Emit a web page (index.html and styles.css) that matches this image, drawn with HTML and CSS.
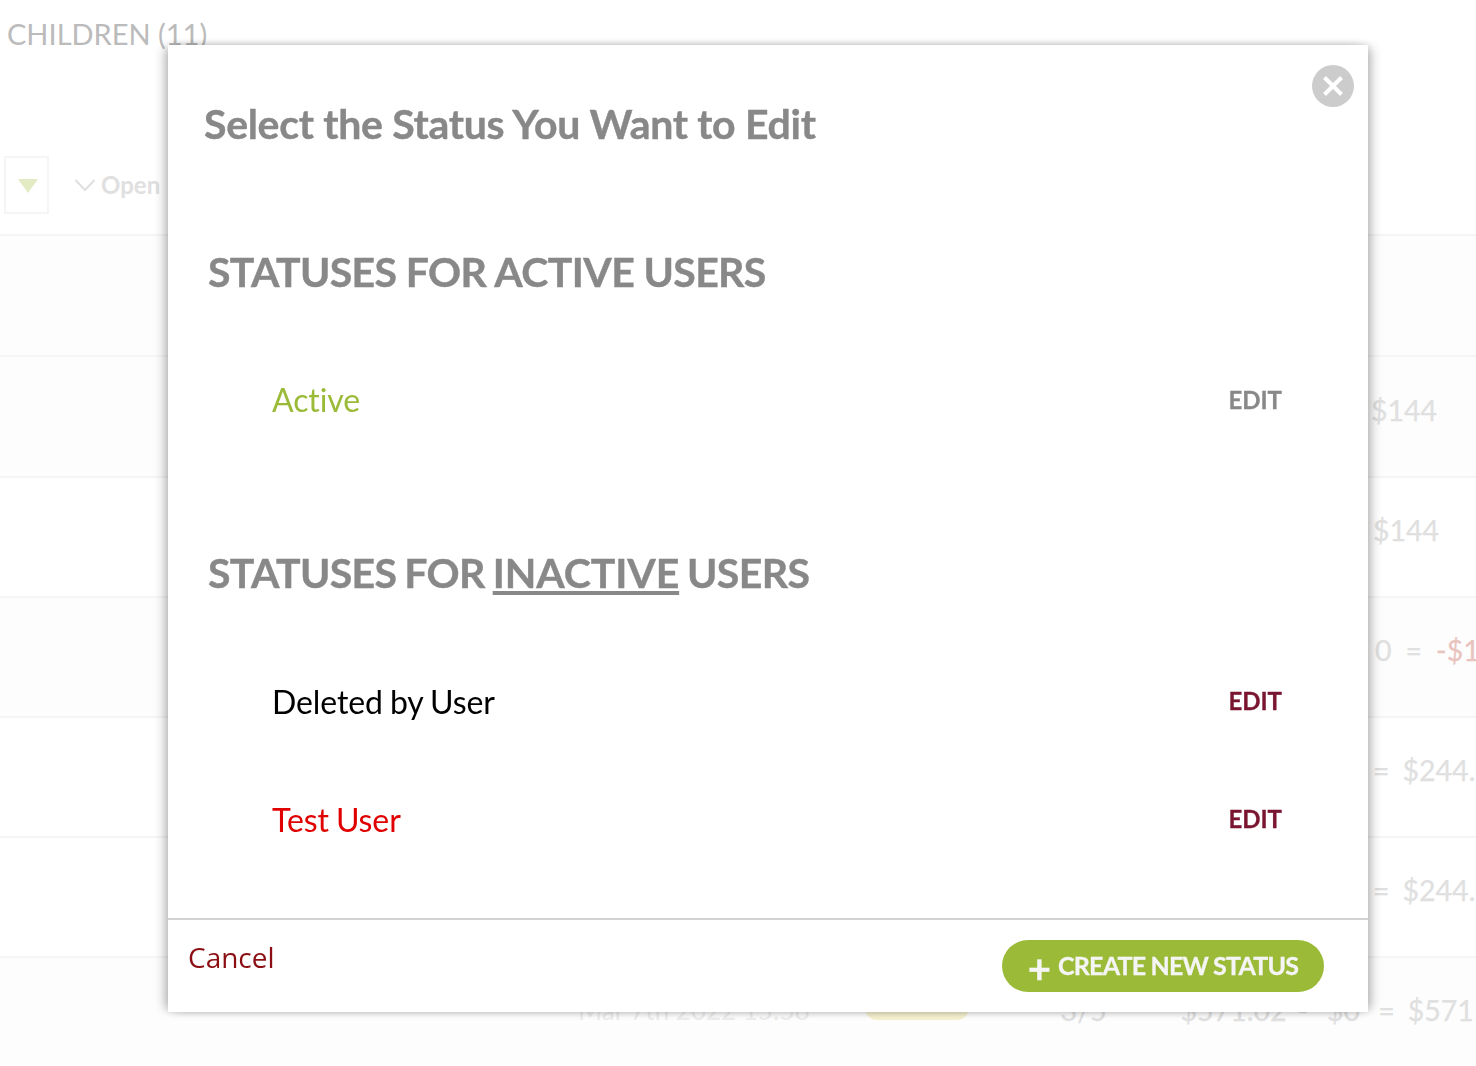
FILE: index.html
```html
<!DOCTYPE html>
<html lang="en">
<head>
<meta charset="utf-8">
<title>Select the Status You Want to Edit</title>
<link rel="stylesheet" href="styles.css">
</head>
<body>
<main class="page">
  <h2 class="children">CHILDREN (11)</h2>
  <div class="filters">
    <span class="filter-box"><span class="filter-arrow"></span></span>
    <span class="open-filter">
      <svg class="chevron" viewBox="0 0 22 14" aria-hidden="true"><path d="M1.5 2 11 12 20.5 2"/></svg>
      Open
    </span>
  </div>
  <section class="rows">
    <div class="row tint tall"></div>
    <div class="row tint tall"><span class="amt pad-a">$144</span></div>
    <div class="row"><span class="amt pad-b">$144</span></div>
    <div class="row tint">
      <span class="amt pad-c">0</span><span class="amt op-eq">=</span><span class="amt neg">-$1</span>
    </div>
    <div class="row">
      <span class="amt pad-d">=</span><span class="amt result">$244.</span>
    </div>
    <div class="row">
      <span class="amt pad-d">=</span><span class="amt result">$244.</span>
    </div>
    <div class="row tint last">
      <span class="date">Mar 7th 2022 15:56</span>
      <span class="badge"></span>
      <span class="amt count">3/5</span>
      <span class="amt sum">$571.02</span><span class="amt minus">-</span><span class="amt paid">$0</span><span class="amt op-last">=</span><span class="amt result">$571</span>
    </div>
  </section>
</main>

<div class="modal" role="dialog">
  <button class="close" type="button" aria-label="Close">
    <svg viewBox="0 0 22 22" aria-hidden="true"><path d="M2.5 2.5 19.5 19.5M19.5 2.5 2.5 19.5"/></svg>
  </button>
  <div class="modal-body">
    <h1 class="title">Select the Status You Want to Edit</h1>
    <h2 class="section-head">STATUSES FOR ACTIVE USERS</h2>
    <ul class="status-list">
      <li class="status"><span class="status-name green">Active</span><a class="edit muted">EDIT</a></li>
    </ul>
    <h2 class="section-head second">STATUSES FOR <u>INACTIVE</u> USERS</h2>
    <ul class="status-list lower">
      <li class="status"><span class="status-name">Deleted by User</span><a class="edit">EDIT</a></li>
      <li class="status"><span class="status-name red">Test User</span><a class="edit">EDIT</a></li>
    </ul>
  </div>
  <footer class="modal-foot">
    <a class="cancel">Cancel</a>
    <button class="create" type="button"><span class="plus">+</span>CREATE NEW STATUS</button>
  </footer>
</div>
</body>
</html>
```
FILE: styles.css
```css
* { box-sizing: border-box; }
html, body { margin: 0; height: 100%; overflow: hidden; background: #fff; }
body { font-family: Lato, "Liberation Sans", sans-serif; }

.page { width: 1476px; }
.children { margin: 0; padding: 16px 0 0 7px; height: 155px; font-size: 29px; line-height: 36px; font-weight: 400; color: #bbb; }
.filters { display: flex; align-items: center; height: 79px; padding: 0 0 20px 4px; }
.filter-box { width: 45px; height: 58px; border: 2px solid #f5f5f5; display: flex; justify-content: center; padding: 21px 0 0 2px; }
.filter-arrow { width: 0; height: 0; border-left: 10px solid transparent; border-right: 10px solid transparent; border-top: 14px solid #e2ebc3; }
.open-filter { display: flex; align-items: center; margin-left: 25px; gap: 5px; font-size: 24px; font-weight: 700; color: #e0e0e0; }
.chevron { width: 22px; height: 14px; fill: none; stroke: #e0e0e0; stroke-width: 2; }

.rows { border-top: 2px solid #f5f5f5; }
.row { height: 120px; padding-bottom: 14px; display: flex; align-items: center; white-space: nowrap; border-bottom: 2px solid #f5f5f5; overflow: hidden; }
.tall { height: 121px; }
.tint { background: #fdfdfd; }
.row.last { border-bottom: 0; padding-bottom: 17px; }
.amt { font-size: 28.5px; line-height: 36px; color: #e0e0e0; -webkit-text-stroke: .25px #e0e0e0; }
.pad-a { margin-left: 1371px; }
.pad-b { margin-left: 1373px; }
.pad-c { margin-left: 1375px; }
.pad-d { margin-left: 1373px; }
.op-eq { margin: 0 14px; }
.result { margin-left: 13px; }
.amt.neg { color: #e9c4bf; -webkit-text-stroke-color: #e9c4bf; }
.date { margin-left: 578px; font-size: 26px; line-height: 36px; color: #ececec; }
.badge { width: 104px; height: 40px; margin: 0 0 20px 55px; border-radius: 12px; background: #f5f1cf; }
.count { margin-left: 92px; }
.sum { margin-left: 74px; }
.minus { margin-left: 11px; }
.paid { margin-left: 19px; }
.op-last { margin-left: 18px; }

.modal { position: fixed; left: 168px; top: 45px; width: 1200px; height: 967px; background: #fff; display: flex; flex-direction: column; box-shadow: 7px 0 10px -3px rgba(0,0,0,.22), -7px 0 10px -3px rgba(0,0,0,.22), 0 0 8px rgba(0,0,0,.14); }
.close { position: absolute; right: 14px; top: 20px; width: 42px; height: 42px; padding: 10px; border: 0; border-radius: 50%; background: #ccc; }
.close svg { display: block; width: 22px; height: 22px; fill: none; stroke: #fff; stroke-width: 4; }
.modal-body { flex: 1; padding: 52px 86px 0 36px; }
.title { margin: 0; font-size: 41px; line-height: 54px; font-weight: 700; letter-spacing: -.3px; color: #888; -webkit-text-stroke: .4px #888; }
.section-head { margin: 94px 0 0 4px; font-size: 41px; line-height: 54px; font-weight: 700; letter-spacing: -.62px; color: #888; -webkit-text-stroke: .4px #888; }
.section-head.second { margin-top: 88px; word-spacing: -1.5px; }
.section-head u { letter-spacing: -.1px; }
.status-list { list-style: none; margin: 0; padding: 41px 0 0 68px; }
.status-list.lower { padding-top: 42px; }
.status { display: flex; justify-content: space-between; align-items: center; height: 118px; }
.status-name { font-size: 32px; letter-spacing: -.1px; word-spacing: -1px; color: #000; }
.green { color: #9bbb38; }
.red { color: #e00000; }
.edit { font-size: 24px; font-weight: 700; color: #7a1530; -webkit-text-stroke: .3px #7a1530; }
.lower .edit { margin-bottom: 2px; }
.edit.muted { color: #888; -webkit-text-stroke-color: #888; }

.modal-foot { height: 94px; border-top: 2px solid #d3d3d3; display: flex; justify-content: space-between; padding: 18px 44px 0 20px; }
.cancel { font-family: "Open Sans", sans-serif; font-size: 28px; line-height: 38px; color: #8b0f12; }
.create { height: 52px; width: 322px; margin-top: 2px; border: 0; border-radius: 26px; background: #9bbb38; color: #f5f5f5; font: 700 25px Lato, sans-serif; letter-spacing: -.8px; -webkit-text-stroke: .3px #f5f5f5; display: flex; align-items: center; justify-content: center; gap: 7px; padding: 0 0 2px; }
.plus { font-size: 40px; line-height: 1; margin-top: 6px; letter-spacing: 0; }
```
